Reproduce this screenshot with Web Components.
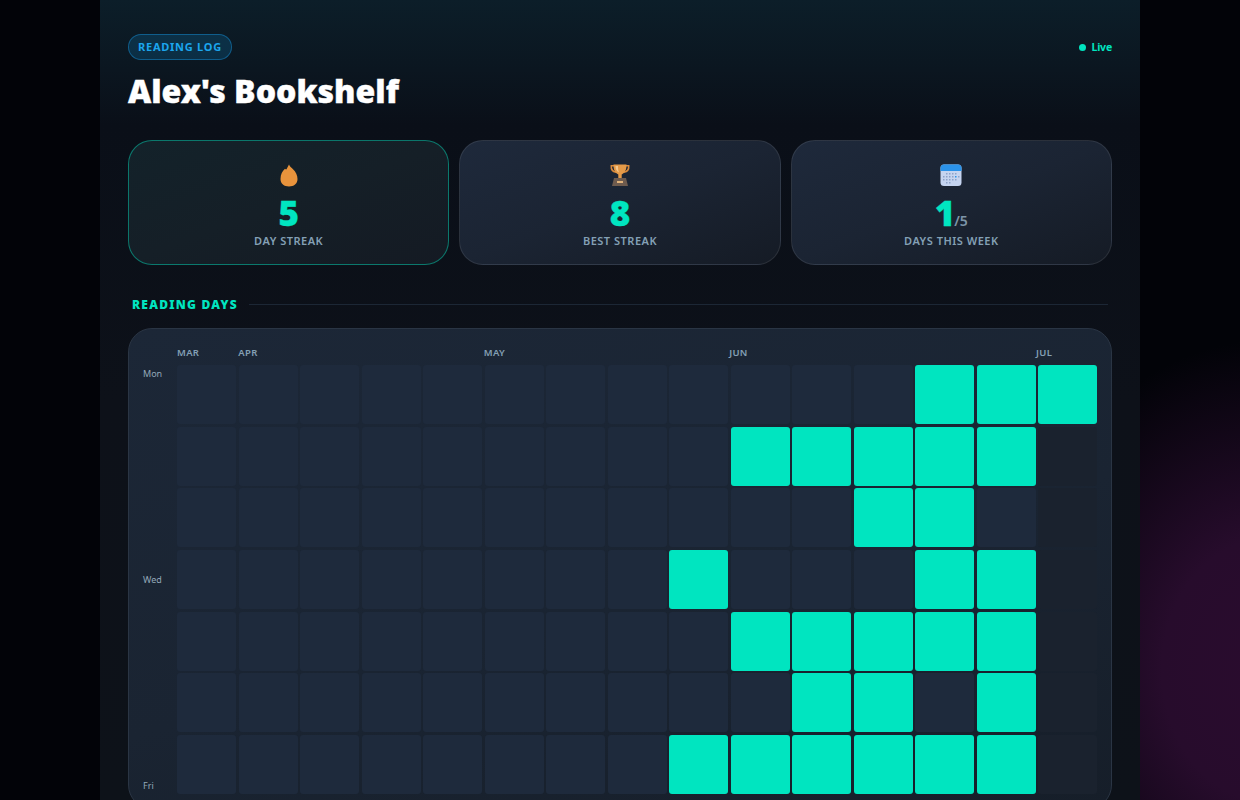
<!DOCTYPE html>
<html lang="en">
<head>
<meta charset="utf-8">
<title>Alex's Bookshelf</title>
<style>
    html, body {
        margin: 0;
        height: 800px;
        overflow: hidden;
        background-color: #020308;
    }

    body {
        background-image: radial-gradient(ellipse 270px 330px at 1270px 670px, #2a0c2e 0%, #270c2c 40%, #020308 100%);
        font-family: "Noto Sans", "Open Sans", sans-serif;
    }
</style>
</head>
<body>
<log-page>
    <log-header slot="header" title="Alex's Bookshelf" badge="READING LOG"></log-header>
    <stat-card slot="stats" hot label="DAY STREAK" value="5" icon="flame"></stat-card>
    <stat-card slot="stats" label="BEST STREAK" value="8" icon="trophy"></stat-card>
    <stat-card slot="stats" label="DAYS THIS WEEK" value="1" suffix="/5" icon="calendar"></stat-card>
    <section-title slot="days">READING DAYS</section-title>
    <heat-map slot="days"></heat-map>
</log-page>
<script>
const ICONS = {
    flame: `<svg width="22" height="24" viewBox="0 0 22 24">
        <path fill="#e8933c" d="M11 .5C11.500 2.500 13.500 3.500 15 5.300C17.800 7.800 19.500 11.500 19.500 15C19.500 19.800 15.800 22.500 11 22.500C6.200 22.500 2.500 19.800 2.500 15C2.500 10.500 4.300 7 7 4.800C7.500 5.300 8 5.500 8.500 5.300C9.300 3.800 10 2 11 .5z"/>
    </svg>`,
    trophy: `<svg width="22" height="24" viewBox="0 0 22 24">
        <path fill="none" stroke="#d98a3c" stroke-width="1.600" d="M5 1.800H2.300c-.3 3.700 1 5.900 4.700 6.400M17 1.800h2.700c.3 3.700-1 5.900-4.700 6.400"/>
        <path fill="#e59a48" d="M4.500 .5h13c.2 5-1.600 8.600-4.800 10v3.500H9.300v-3.500C6.100 9.100 4.300 5.500 4.500 .5z"/>
        <path fill="#f5c88c" d="M6.500 2h2.500c-.1 2.500.2 4.500 1 6.500-2.200-1-3.500-3.500-3.500-6.500z"/>
        <path fill="#6e5b4e" d="M5 14h12l2 8H3z"/>
        <rect x="8" y="17" width="6" height="2" fill="#e0b27a"/>
    </svg>`,
    calendar: `<svg width="22" height="24" viewBox="0 0 22 24">
        <rect x="0.500" y="0.500" width="21" height="21.500" rx="3.500" fill="#c5d4f0"/>
        <path fill="#2b93ea" d="M4 .5h14a3.500 3.500 0 0 1 3.500 3.500v3H.5v-3A3.500 3.500 0 0 1 4 .5z"/>
        <g fill="#8ea2c8">
            <rect x="6" y="9" width="1.500" height="1.500"/><rect x="9" y="9" width="1.500" height="1.500"/><rect x="12" y="9" width="1.500" height="1.500"/><rect x="15" y="9" width="1.500" height="1.500"/>
            <rect x="3" y="12" width="1.500" height="1.500"/><rect x="6" y="12" width="1.500" height="1.500"/><rect x="9" y="12" width="1.500" height="1.500"/><rect x="12" y="12" width="1.500" height="1.500"/><rect x="18" y="12" width="1.500" height="1.500"/>
            <rect x="3" y="15" width="1.500" height="1.500"/><rect x="6" y="15" width="1.500" height="1.500"/><rect x="9" y="15" width="1.500" height="1.500"/><rect x="12" y="15" width="1.500" height="1.500"/><rect x="15" y="15" width="1.500" height="1.500"/>
            <rect x="6" y="18" width="1.500" height="1.500"/><rect x="9" y="18" width="1.500" height="1.500"/>
        </g>
        <rect x="15" y="12" width="1.500" height="1.500" fill="#2b93ea"/>
    </svg>`,
};

const MONTHS = { 0: "MAR", 1: "APR", 5: "MAY", 9: "JUN", 14: "JUL" };

// active week columns for each weekday row
const ACTIVE = [
    [12, 13, 14],
    [9, 10, 11, 12, 13],
    [11, 12],
    [8, 12, 13],
    [9, 10, 11, 12, 13],
    [10, 11, 13],
    [8, 9, 10, 11, 12, 13],
];

class LogPage extends HTMLElement {
    connectedCallback() {
        const shadow = this.attachShadow({ mode: "open" });
        shadow.innerHTML = `<style>
            :host {
                display: block;
                width: 1040px;
                margin: 0 auto;
                padding: 34px 28px 28px;
                box-sizing: border-box;
                min-height: 800px;
                background: linear-gradient(180deg, #0c1e29 0%, #0b1620 70px, #0a0f18 125px, #0d1119 400px, #0d1219 800px);
            }

            #stats {
                display: grid;
                grid-template-columns: repeat(3, 1fr);
                gap: 10px;
                margin-top: 28px;
            }

            #days {
                margin-top: 31px;
            }
        </style>
        <slot name="header"></slot>
        <div id="stats"><slot name="stats"></slot></div>
        <div id="days"><slot name="days"></slot></div>`;
    }
}

class LogHeader extends HTMLElement {
    connectedCallback() {
        const shadow = this.attachShadow({ mode: "open" });
        shadow.innerHTML = `<style>
            :host {
                display: block;
            }

            #top {
                display: flex;
                justify-content: space-between;
                align-items: center;
            }

            #badge {
                padding: 0 9px;
                height: 24px;
                line-height: 24px;
                font-size: 11px;
                font-weight: 700;
                letter-spacing: 0.750px;
                color: #1ba6ee;
                background: rgba(14, 140, 210, 0.2);
                border: 1px solid rgba(20, 140, 210, 0.5);
                border-radius: 13px;
            }

            #live {
                display: flex;
                align-items: center;
                gap: 6px;
                font-size: 10.500px;
                line-height: 24px;
                font-weight: 700;
                letter-spacing: -0.200px;
                color: #00e5c0;
            }

            #dot {
                width: 7px;
                height: 7px;
                border-radius: 50%;
                background: #00e5c0;
            }

            h1 {
                margin: 10px 0 0;
                font-size: 32px;
                line-height: 42px;
                font-weight: 900;
                -webkit-text-stroke: 0.400px #fff;
                color: #fff;
            }
        </style>
        <div id="top">
            <span id="badge">${this.getAttribute("badge")}</span>
            <span id="live"><span id="dot"></span>Live</span>
        </div>
        <h1>${this.getAttribute("title")}</h1>`;
    }
}

class StatCard extends HTMLElement {
    connectedCallback() {
        const shadow = this.attachShadow({ mode: "open" });
        const suffix = this.getAttribute("suffix");
        shadow.innerHTML = `<style>
            :host {
                display: flex;
                flex-direction: column;
                align-items: center;
                height: 125px;
                padding-top: 23px;
                box-sizing: border-box;
                border-radius: 24px;
                border: 1px solid rgba(255, 255, 255, 0.09);
                background: linear-gradient(160deg, #1e293b 0%, #1b2433 50%, #151b25 100%);
            }

            :host([hot]) {
                border-color: rgba(0, 229, 192, 0.45);
                background: linear-gradient(160deg, #13222a 0%, #151f27 50%, #141a23 100%);
            }

            svg {
                display: block;
            }

            #value {
                margin-top: 4px;
                font-size: 35px;
                line-height: 42px;
                font-weight: 900;
                -webkit-text-stroke: 0.300px #00e5c0;
                color: #00e5c0;
            }

            #value span {
                margin-left: -1px;
                font-size: 14px;
                line-height: 0;
                font-weight: 600;
                -webkit-text-stroke: 0;
                color: #7d95a8;
            }

            #label {
                font-size: 11px;
                line-height: 14px;
                font-weight: 600;
                letter-spacing: 0.500px;
                color: #84a0b5;
            }
        </style>
        ${ICONS[this.getAttribute("icon")]}
        <div id="value">${this.getAttribute("value")}${suffix ? `<span>${suffix}</span>` : ""}</div>
        <div id="label">${this.getAttribute("label")}</div>`;
    }
}

class SectionTitle extends HTMLElement {
    connectedCallback() {
        const shadow = this.attachShadow({ mode: "open" });
        shadow.innerHTML = `<style>
            :host {
                display: flex;
                align-items: center;
                gap: 11px;
                padding: 0 4px;
                height: 16px;
                margin-bottom: 16px;
                font-size: 12px;
                font-weight: 900;
                letter-spacing: 1.250px;
                color: #00e5c0;
            }

            #line {
                flex: 1;
                height: 1px;
                background: #1c2735;
            }
        </style>
        <slot></slot><div id="line"></div>`;
    }
}

class HeatMap extends HTMLElement {
    connectedCallback() {
        const shadow = this.attachShadow({ mode: "open" });
        let months = "";
        for (const col in MONTHS) {
            months += `<span style="grid-column: ${Number(col) + 1}">${MONTHS[col]}</span>`;
        }
        let cells = "";
        ACTIVE.forEach((row) => {
            for (let c = 0; c < 15; c++) {
                let cls = "cell";
                if (row.includes(c)) {
                    cls += " on";
                } else if (c === 14) {
                    cls += " future";
                }
                cells += `<div class="${cls}"></div>`;
            }
        });
        shadow.innerHTML = `<style>
            :host {
                display: grid;
                grid-template-columns: 34px 1fr;
                padding: 17px 14px 14px;
                border-radius: 24px;
                border: 1px solid #2a3544;
                background: linear-gradient(165deg, #1c2737 0%, #1a2432 55%, #161e29 100%);
            }

            #months {
                grid-column: 2;
                display: grid;
                grid-template-columns: repeat(15, 61.360px);
                height: 19.200px;
                font-size: 9.500px;
                line-height: 14px;
                font-weight: 600;
                letter-spacing: 0.300px;
                color: #84a0b5;
            }

            #months span {
                white-space: nowrap;
            }

            #labels {
                display: flex;
                flex-direction: column;
                justify-content: space-between;
                font-size: 9px;
                line-height: 17px;
                color: #93a8b8;
            }

            #grid {
                display: grid;
                grid-template-columns: repeat(15, 1fr);
                column-gap: 2.500px;
                row-gap: 2.600px;
            }

            .cell {
                aspect-ratio: 1;
                border-radius: 3px;
                background: #1e2a3c;
            }

            .on {
                background: #00e5c0;
            }

            .future {
                background: #1a222e;
            }
        </style>
        <div id="months">${months}</div>
        <div id="labels"><span>Mon</span><span>Wed</span><span>Fri</span></div>
        <div id="grid">${cells}</div>`;
    }
}

customElements.define("log-page", LogPage);
customElements.define("log-header", LogHeader);
customElements.define("stat-card", StatCard);
customElements.define("section-title", SectionTitle);
customElements.define("heat-map", HeatMap);
</script>
</body>
</html>
